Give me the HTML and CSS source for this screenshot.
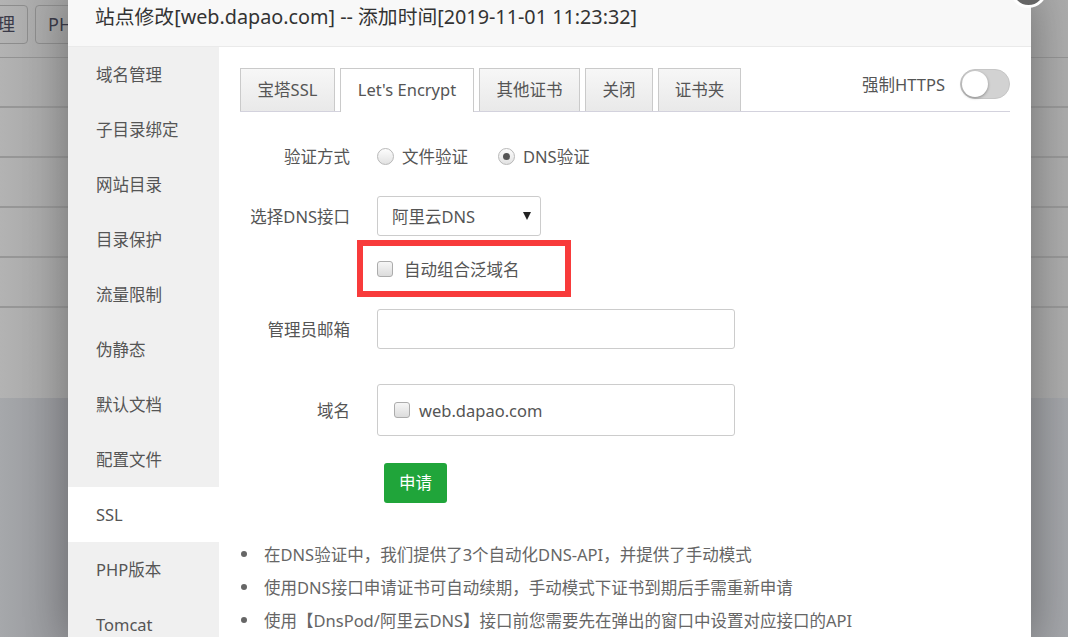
FILE: index.html
```html
<!DOCTYPE html>
<html lang="zh-CN">
<head>
<meta charset="utf-8">
<title>站点修改</title>
<link rel="stylesheet" href="styles.css">
</head>
<body>
<div class="page">
  <div class="bg-toolbar">
    <span class="bg-btn bg-btn-a">管理</span>
    <span class="bg-btn bg-btn-b">PHP</span>
  </div>
  <div class="bg-row"></div>
  <div class="bg-row"></div>
  <div class="bg-row"></div>
  <div class="bg-row"></div>
  <div class="bg-row"></div>
  <div class="bg-fill"></div>
  <div class="bg-footer"></div>
</div>

<div class="dialog">
  <span class="close-btn"></span>
  <div class="dlg-head">站点修改[web.dapao.com] -- 添加时间[2019-11-01 11:23:32]</div>
  <div class="dlg-body">
    <nav class="side">
      <div class="side-item">域名管理</div>
      <div class="side-item">子目录绑定</div>
      <div class="side-item">网站目录</div>
      <div class="side-item">目录保护</div>
      <div class="side-item">流量限制</div>
      <div class="side-item">伪静态</div>
      <div class="side-item">默认文档</div>
      <div class="side-item">配置文件</div>
      <div class="side-item active">SSL</div>
      <div class="side-item">PHP版本</div>
      <div class="side-item">Tomcat</div>
    </nav>
    <main class="main">
      <div class="tabs">
        <span class="tab tab-bt">宝塔SSL</span>
        <span class="tab tab-le active">Let's Encrypt</span>
        <span class="tab tab-other">其他证书</span>
        <span class="tab tab-close">关闭</span>
        <span class="tab tab-folder">证书夹</span>
        <div class="https">
          <span class="https-label">强制HTTPS</span>
          <span class="toggle"><span class="knob"></span></span>
        </div>
      </div>

      <div class="form">
        <div class="frow row-verify">
          <span class="flabel">验证方式</span>
          <span class="radio"></span><span class="opt-text">文件验证</span>
          <span class="radio on"></span><span class="opt-text">DNS验证</span>
        </div>
        <div class="frow row-select">
          <span class="flabel">选择DNS接口</span>
          <span class="select"><span class="select-text">阿里云DNS</span><span class="caret"></span></span>
        </div>
        <div class="frow row-wild">
          <span class="flabel"></span>
          <span class="redbox"><span class="checkbox"></span><span class="cb-text">自动组合泛域名</span></span>
        </div>
        <div class="frow row-email">
          <span class="flabel">管理员邮箱</span>
          <span class="input"></span>
        </div>
        <div class="frow row-domain">
          <span class="flabel">域名</span>
          <span class="domain-box"><span class="checkbox"></span><span class="domain-text">web.dapao.com</span></span>
        </div>
        <div class="frow row-btn">
          <span class="flabel"></span>
          <span class="btn-green">申请</span>
        </div>
      </div>

      <ul class="tips">
        <li>在DNS验证中，我们提供了3个自动化DNS-API，并提供了手动模式</li>
        <li>使用DNS接口申请证书可自动续期，手动模式下证书到期后手需重新申请</li>
        <li>使用【DnsPod/阿里云DNS】接口前您需要先在弹出的窗口中设置对应接口的API</li>
      </ul>
    </main>
  </div>
</div>
</body>
</html>
```

FILE: styles.css
```css
* { box-sizing: border-box; margin: 0; padding: 0; }
html, body { width: 1068px; height: 637px; overflow: hidden; }
body {
  font-family: "Noto Sans", "Noto Sans CJK SC", sans-serif;
  background: #a9a9a9;
  position: relative;
}

/* underlying page (dimmed) */
.page { height: 637px; display: flex; flex-direction: column; background: linear-gradient(90deg, #b3b3b3 0%, #a4a4a4 6%, #9e9e9e 94%, #ababab 100%); }
.bg-toolbar { height: 58px; flex: none; display: flex; gap: 7px; padding-top: 5px; border-bottom: 1px solid #929292; }
.bg-btn { height: 39px; border: 1px solid #8c8c8c; border-radius: 4px; color: #3a3a48; font-size: 18px; line-height: 37px; padding: 0 12px; white-space: nowrap; }
.bg-btn-a { margin-left: -34px; }
.bg-btn-b { width: 60px; overflow: hidden; }
.bg-row { height: 50px; flex: none; border-bottom: 2px solid #969696; }
.bg-fill { flex: 1; }
.bg-footer { height: 239px; flex: none; background: linear-gradient(90deg, #a6a8ab 0%, #95969a 6%, #929396 94%, #a3a5a9 100%); }

/* dialog */
.dialog {
  position: absolute; left: 68px; top: 0; width: 963px; height: 637px;
  background: #fff; box-shadow: 0 0 40px rgba(0,0,0,.28);
  display: flex; flex-direction: column;
}
.close-btn {
  position: absolute; right: -16px; top: -29px; width: 37px; height: 37px;
  border-radius: 50%; background: #666; border: 3px solid #fff; z-index: 2;
}
.dlg-head {
  height: 47px; flex: none; background: #f8f8f8; border-bottom: 1px solid #eaeaea;
  padding-left: 27px; font-size: 19.8px; color: #333; line-height: 34px; white-space: nowrap;
}
.dlg-body { flex: 1; display: flex; min-height: 0; }
.side { width: 151px; flex: none; background: #f0f0f0; }
.side-item { height: 55px; line-height: 55px; padding-left: 28px; font-size: 16.5px; color: #555; }
.side-item.active { background: #fff; }

.main { flex: 1; padding: 21px 21px 0 21px; }
.tabs { display: flex; align-items: flex-start; height: 44px; border-bottom: 1px solid #d3d2dd; }
.tab {
  height: 43px; margin-right: 5px; text-align: center;
  border: 1px solid #cacaca; border-bottom: none;
  background: linear-gradient(#f7f7f7, #e9e9e9);
  font-size: 16.5px; color: #555; line-height: 42px; white-space: nowrap; flex: none;
}
.tab-bt { width: 95px; }
.tab-le { width: 134px; }
.tab-other { width: 101px; }
.tab-close { width: 68px; }
.tab-folder { width: 83px; }
.tab.active { background: #fff; height: 44px; position: relative; z-index: 1; }
.https { margin-left: auto; display: flex; align-items: center; height: 31px; }
.https-label { font-size: 16.5px; color: #555; margin-right: 15px; }
.toggle { width: 50px; height: 30px; border-radius: 15px; background: #d2d2d2; border: 1px solid #c6c6c6; display: flex; align-items: center; padding-left: 1px; }
.knob { width: 26px; height: 26px; border-radius: 50%; background: #fff; box-shadow: 0 1px 3px rgba(0,0,0,.35); }

.form { padding-top: 24px; }
.frow { display: flex; align-items: center; }
.flabel { width: 110px; margin-right: 27px; text-align: right; font-size: 16.5px; color: #555; flex: none; white-space: nowrap; }
.row-verify { height: 40px; }
.row-select { height: 40px; margin-top: 20px; }
.row-wild { height: 57px; margin-top: 4px; }
.row-email { height: 40px; margin-top: 12px; }
.row-domain { height: 52px; margin-top: 35px; }
.row-btn { height: 40px; margin-top: 27px; }

.radio {
  width: 17px; height: 17px; border-radius: 50%; border: 1px solid #b8b8b8;
  background: linear-gradient(#fdfdfd, #e2e2e2);
  display: inline-flex; align-items: center; justify-content: center; flex: none;
}
.radio:first-of-type { margin-left: 1px; }
.radio.on::after { content: ""; width: 7px; height: 7px; border-radius: 50%; background: #555; }
.opt-text { font-size: 16.5px; color: #555; margin-left: 8px; margin-right: 30px; }

.select {
  width: 164px; height: 40px; border: 1px solid #ccc; border-radius: 3px;
  display: flex; align-items: center; justify-content: space-between; padding: 0 9px 0 14px;
}
.select-text { font-size: 16.5px; color: #555; }
.caret { width: 0; height: 0; border-left: 4px solid transparent; border-right: 4px solid transparent; border-top: 8px solid #222; }

.redbox {
  margin-left: -20px; width: 214px; height: 57px; border: 6px solid #f83b3b;
  display: flex; align-items: center; padding-left: 14px;
}
.checkbox {
  width: 16px; height: 16px; border-radius: 3px; border: 1px solid #acacac;
  background: linear-gradient(#f6f6f6, #dcdcdc); flex: none;
}
.cb-text { font-size: 16.5px; color: #555; margin-left: 11px; white-space: nowrap; }

.input { width: 358px; height: 40px; border: 1px solid #ccc; border-radius: 3px; }
.domain-box { width: 358px; height: 52px; border: 1px solid #ccc; border-radius: 3px; display: flex; align-items: center; padding-left: 16px; }
.domain-text { font-size: 16.5px; color: #555; margin-left: 9px; }

.btn-green {
  margin-left: 7px; width: 63px; height: 40px; border-radius: 3px; background: #20a53a;
  color: #fff; font-size: 16.5px; line-height: 40px; text-align: center;
}

.tips { list-style: none; margin-top: 34px; }
.tips li { height: 33px; display: flex; align-items: center; font-size: 16.5px; color: #666; white-space: nowrap; }
.tips li::before { content: ""; width: 6px; height: 6px; border-radius: 50%; background: #666; margin-left: 1px; margin-right: 17px; flex: none; }
```
